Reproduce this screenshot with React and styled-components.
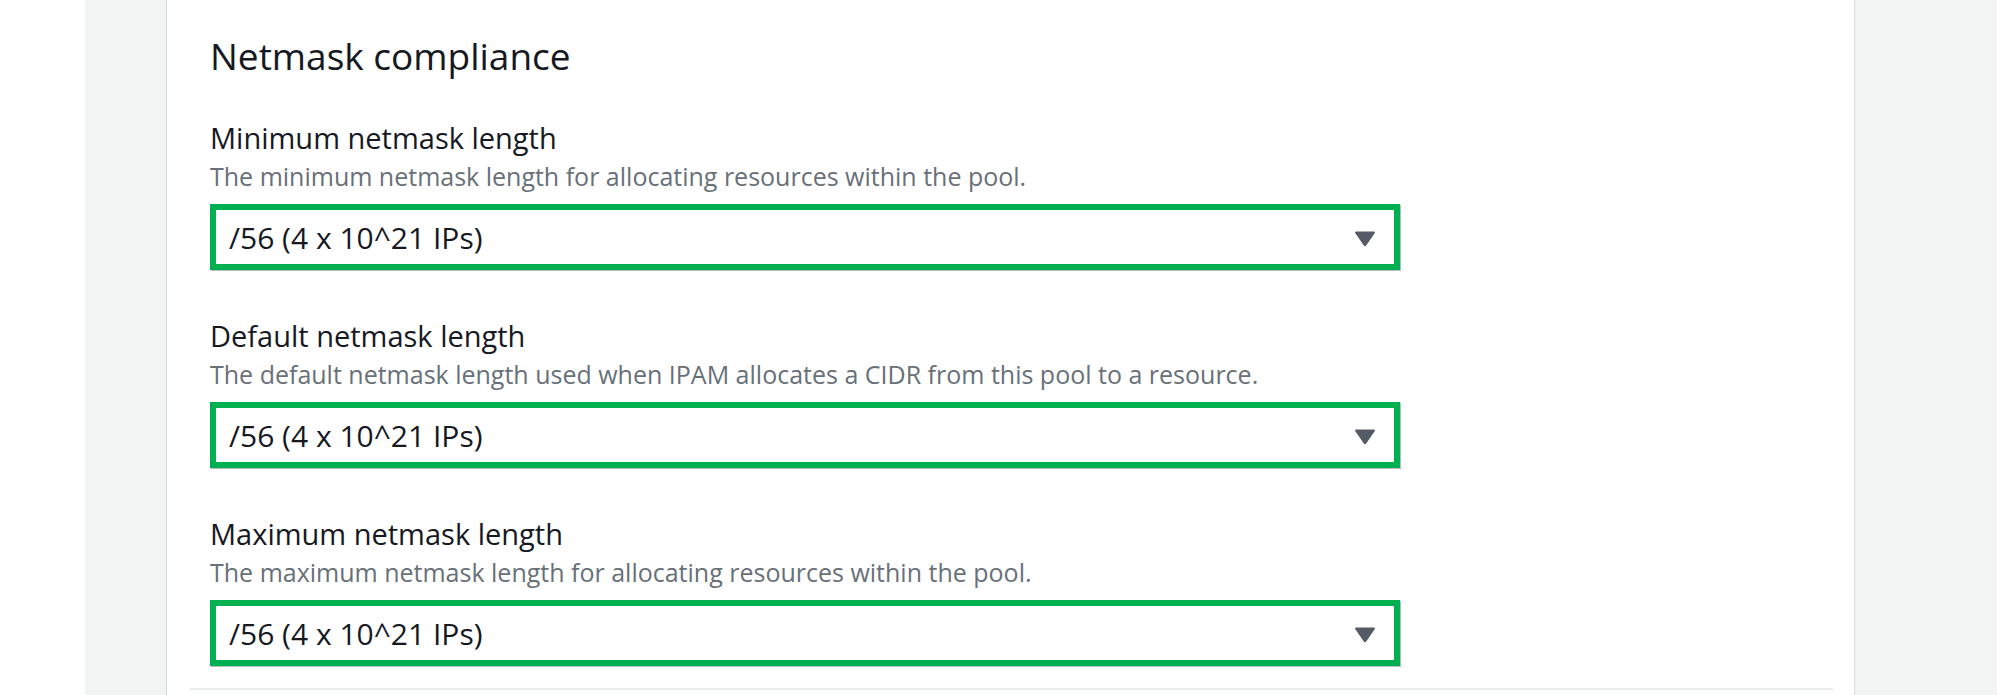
import React from "react";
import styled, { createGlobalStyle } from "styled-components";

const GlobalStyle = createGlobalStyle`
  html, body {
    margin: 0;
    padding: 0;
    background: #ffffff;
  }
  body {
    font-family: "Open Sans", "Noto Sans", Arial, sans-serif;
    color: #16191f;
  }
`;

const fields = [
  {
    label: "Minimum netmask length",
    hint: "The minimum netmask length for allocating resources within the pool.",
    value: "/56 (4 x 10^21 IPs)",
  },
  {
    label: "Default netmask length",
    hint: "The default netmask length used when IPAM allocates a CIDR from this pool to a resource.",
    value: "/56 (4 x 10^21 IPs)",
  },
  {
    label: "Maximum netmask length",
    hint: "The maximum netmask length for allocating resources within the pool.",
    value: "/56 (4 x 10^21 IPs)",
  },
];

function CaretDown() {
  return (
    <svg width="22" height="17" viewBox="0 0 22 17">
      <path
        d="M2 1.5 H20 Q21.5 1.5 20.8 3 L12.2 15.5 Q11 17 9.8 15.5 L1.2 3 Q0.5 1.5 2 1.5 Z"
        fill="#545b64"
      />
    </svg>
  );
}

function App() {
  return (
    <Page>
      <GlobalStyle />
      <Gutter />
      <SideNav />
      <Main>
        <Heading>Netmask compliance</Heading>
        {fields.map((f) => (
          <Field key={f.label}>
            <Label>{f.label}</Label>
            <Hint>{f.hint}</Hint>
            <Select>
              <span>{f.value}</span>
              <CaretDown />
            </Select>
          </Field>
        ))}
        <Divider />
      </Main>
      <RightRail />
    </Page>
  );
}

export default App;

const Page = styled.div`
  display: flex;
  width: 1997px;
  height: 695px;
  overflow: hidden;
`;

const Gutter = styled.div`
  width: 85px;
  flex-shrink: 0;
  background: #ffffff;
`;

const SideNav = styled.div`
  width: 81px;
  flex-shrink: 0;
  background: #f2f3f3;
  border-right: 1px solid #d5dbdb;
`;

const Main = styled.div`
  flex: 1;
  background: #ffffff;
  padding: 34px 21px 0 43px;
  display: flex;
  flex-direction: column;
`;

const RightRail = styled.div`
  width: 142px;
  flex-shrink: 0;
  background: #f2f3f3;
  border-left: 1px solid #d5dbdb;
`;

const Heading = styled.h2`
  margin: 0 0 42px;
  font-size: 37px;
  line-height: 44px;
  font-weight: 400;
  color: #16191f;
`;

const Field = styled.div`
  display: flex;
  flex-direction: column;
  margin-bottom: 48px;

  &:nth-of-type(3) {
    margin-bottom: 22px;
  }
`;

const Label = styled.div`
  font-size: 29px;
  line-height: 36px;
  color: #16191f;
`;

const Hint = styled.div`
  margin-top: 4px;
  font-size: 25px;
  line-height: 32px;
  color: #687078;
`;

const Select = styled.div`
  margin-top: 12px;
  width: 1190px;
  height: 66px;
  box-sizing: border-box;
  border: 6px solid #00b050;
  box-shadow: 1px 1px 0 #b6bec4;
  display: flex;
  align-items: center;
  justify-content: space-between;
  padding: 0 18px 0 13px;
  font-size: 30px;
  color: #16191f;

  svg {
    margin-top: 2px;
  }
`;

const Divider = styled.div`
  margin-left: -20px;
  height: 2px;
  background: #eaeded;
`;
